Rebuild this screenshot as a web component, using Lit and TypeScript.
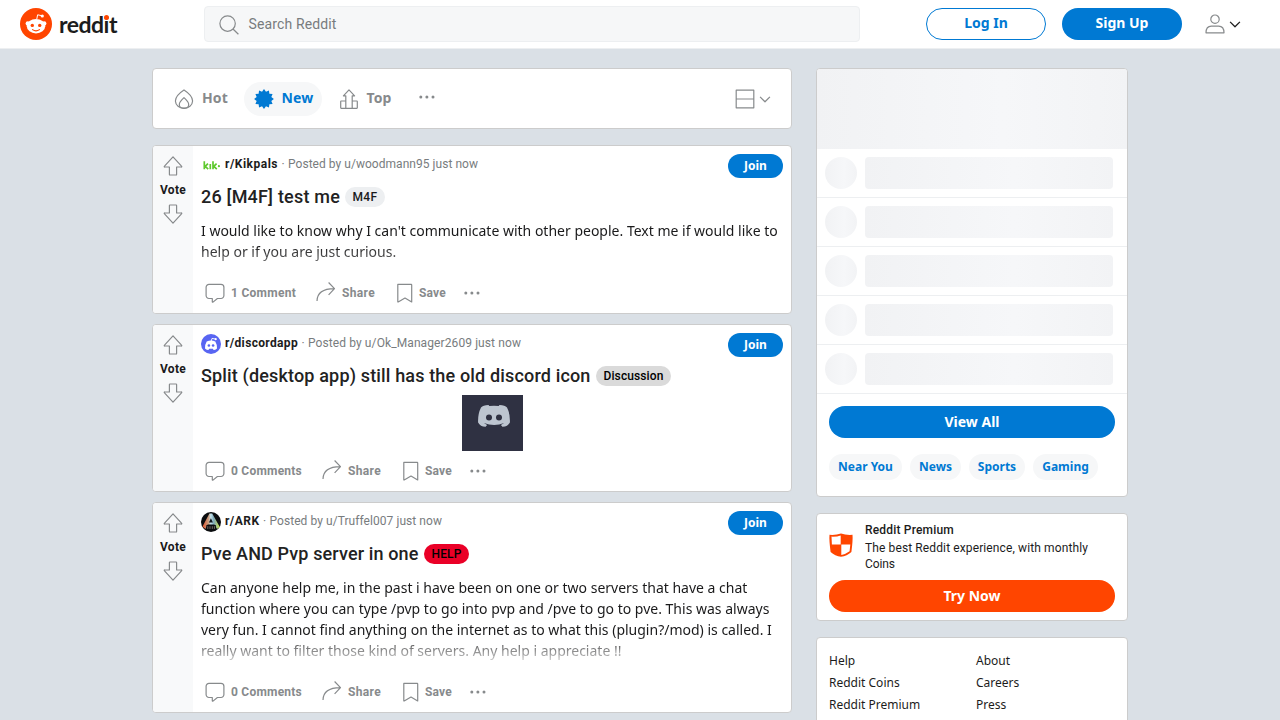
import { LitElement, html, css, svg, nothing } from "lit";
import { customElement, property } from "lit/decorators.js";
import { classMap } from "lit/directives/class-map.js";
import { styleMap } from "lit/directives/style-map.js";

const icon = (body: unknown, size = 20) =>
  html`<svg width=${size} height=${size} viewBox="0 0 20 20" fill="none" stroke="currentColor" stroke-width="1.2" stroke-linejoin="round">${body}</svg>`;

const icons = {
  up: svg`<path d="M10 .8 18.5 10.200a.4.4 0 0 1-.3.8H13.600v7.400a.6.6 0 0 1-.6.6H7a.6.6 0 0 1-.6-.6V11H1.800a.4.4 0 0 1-.3-.8Z"/>`,
  down: svg`<path d="M10 19.200 1.500 9.800a.4.4 0 0 1 .3-.8H6.400V1.600a.6.6 0 0 1 .6-.6h6a.6.6 0 0 1 .6.6V9h4.600a.4.4 0 0 1 .3.8Z"/>`,
  comment: svg`<path d="M7.7 19.2a.4.4 0 0 1-.4-.5v-3.2H4A2.9 2.9 0 0 1 1.1 12.6V4.3A2.9 2.9 0 0 1 4 1.4H16A2.9 2.9 0 0 1 18.9 4.3V12.6A2.9 2.9 0 0 1 16 15.5H12.4L8 19.1a.4.4 0 0 1-.3.1Z"/>`,
  share: svg`<path d="M1 18C1.200 10.300 6.500 5.800 18.200 5.700M12.600-.5 18.500 5.700l-5.900 6.200"/>`,
  save: svg`<path d="M2.8 1.4H16.2a.5.5 0 0 1 .5.5V19L10 15.1 3.2 19a.3.3 0 0 1-.4-.3Z"/>`,
  dots: svg`<g fill="currentColor" stroke="none"><circle cx="3.8" cy="10" r="1.5"/><circle cx="9.9" cy="10" r="1.5"/><circle cx="16" cy="10" r="1.5"/></g>`,
  chevron: svg`<path stroke-width="1.8" d="m3 7 7 7 7-7"/>`,
  hot: svg`<path d="M10 .9C12.8 2.7 18.6 7.1 18.6 12A8.2 7.6 0 0 1 10 19.3 8.2 7.6 0 0 1 1.4 12C1.4 7.1 7.2 2.7 10 .9Z"/><path d="M10 8.6c2.2 2 4.7 4.6 4.7 6.8 0 2.6-2.1 3.8-4.7 3.8s-4.7-1.2-4.7-3.8c0-2.2 2.5-4.8 4.7-6.8Z"/>`,
  top: svg`<path d="M2.2 12h4.6v7.3H2.2a.5.5 0 0 1-.5-.5V12.5a.5.5 0 0 1 .5-.5ZM13.2 12h4.6a.5.5 0 0 1 .5.5v6.3a.5.5 0 0 1-.5.5h-4.6ZM6.8 19.3V6.8H4.4L10 .9l5.6 5.9h-2.4v12.5Z"/>`,
  layout: svg`<path d="M1.2 1.2H18.8V18.8H1.2ZM1.2 10H18.8"/>`,
  user: svg`<circle cx="10" cy="5.2" r="4.2"/><path d="M1 18.8c0-4 2-6.7 5.4-6.7h7.2c3.4 0 5.4 2.7 5.4 6.7Z"/>`,
  search: svg`<circle cx="8.6" cy="8.6" r="7.7"/><path d="m14 14 5.4 5.3"/>`,
};

const burst = Array.from({ length: 24 }, (_, i) => {
  const r = i % 2 ? 7.6 : 9.9;
  const a = (i * Math.PI) / 12;
  return `${(10 + r * Math.sin(a)).toFixed(2)},${(10 - r * Math.cos(a)).toFixed(2)}`;
}).join(" ");

const mascot = html`<svg width="32" height="32" viewBox="0 0 32 32">
  <circle cx="16" cy="16" r="16" fill="#ff4500"/>
  <path d="m16.800 11 .8-4.200 4.700 1" fill="none" stroke="#fff" stroke-width="1"/>
  <circle cx="22.300" cy="8" r="1.600" fill="#fff"/>
  <circle cx="7.900" cy="15.600" r="2.300" fill="#fff"/><circle cx="24.100" cy="15.600" r="2.300" fill="#fff"/>
  <ellipse cx="16" cy="18.200" rx="9.200" ry="7.300" fill="#fff"/>
  <circle cx="12.300" cy="17.400" r="1.700" fill="#ff4500"/><circle cx="19.700" cy="17.400" r="1.700" fill="#ff4500"/>
  <path d="M12.500 21.600c2 1.400 5 1.400 7 0" fill="none" stroke="#ff4500" stroke-width="1.100" stroke-linecap="round"/>
</svg>`;

const avatars: Record<string, unknown> = {
  kik: html`<svg width="20" height="20" viewBox="0 0 20 20"><g stroke="#5fc92e" stroke-width="1.7" fill="none"><path d="M3.3 6.200v8M7 8.600 4.200 11.300 7.200 14.200M9.300 9v5.200M12 6.200v8M15.600 8.600 12.800 11.300 15.800 14.200"/></g><circle cx="17.900" cy="11.200" r="1.100" fill="#5fc92e"/></svg>`,
  discord: html`<svg width="20" height="20" viewBox="0 0 20 20"><circle cx="10" cy="10" r="10" fill="#5865f2"/><path d="M5.700 7.400q4.300-1.800 8.600 0 1.900 3 1.700 7-1.700 1.500-3.400 1.500l-.8-1.200H8.200l-.8 1.200q-1.700 0-3.400-1.500-.2-4 1.700-7Z" fill="#fff"/><path d="m10.200 7 .8-2.600 3.200.6" stroke="#fff" stroke-width=".9" fill="none"/><circle cx="14.700" cy="5.200" r="1.100" fill="#fff"/><circle cx="7.900" cy="11.500" r="1.300" fill="#5865f2"/><circle cx="12.100" cy="11.500" r="1.300" fill="#5865f2"/></svg>`,
  ark: html`<svg width="20" height="20" viewBox="0 0 20 20"><defs><linearGradient id="g"><stop stop-color="#e0532c"/><stop offset=".35" stop-color="#c9a184"/><stop offset=".48" stop-color="#c4e4ee"/><stop offset=".65" stop-color="#7fa9b8"/><stop offset="1" stop-color="#c8e04a"/></linearGradient></defs><circle cx="10" cy="10" r="10" fill="#0b0d0f"/><path d="M8.400 1.500h2.800L18.800 15l-2.800 2-2.600-4.500H6.600L4.400 17l-2.900-2.400Z" fill="url(#g)"/><path d="m9.900 6.200 2 4.400H7.900Z" fill="#101519"/><path d="M5.400 13h9.400v5.200H5.400Z" fill="#0b0d0f"/><path d="M6.800 14.200v2.700M9 14.200v2.700M11.300 14.200v2.700M13.400 14.200v2.700" stroke="#8a8279" stroke-width=".8"/></svg>`,
};

interface Post {
  avatar: string; sub: string; subW: number; by: string; byW: number;
  title: string; titleW: number;
  flair: string; flairW: number; flairBg: string; flairGap: number; flairInk: string;
  lines?: string[]; fade?: string; image?: boolean;
  comments: string; commentsW: number;
}

const posts: Post[] = [
  {
    avatar: "kik", sub: "r/Kikpals", subW: 53, by: "Posted by u/woodmann95 just now", byW: 190,
    title: "26 [M4F] test me", titleW: 139,
    flair: "M4F", flairW: 40, flairBg: "#edeff1", flairGap: 5, flairInk: "#1a1a1b",
    lines: ["I would like to know why I can't communicate with other people. Text me if would like to", "help or if you are just curious."],
    fade: "short", comments: "1 Comment", commentsW: 65,
  },
  {
    avatar: "discord", sub: "r/discordapp", subW: 73, by: "Posted by u/Ok_Manager2609 just now", byW: 213,
    title: "Split (desktop app) still has the old discord icon", titleW: 389.5,
    flair: "Discussion", flairW: 75, flairBg: "#dadada", flairGap: 5.5, flairInk: "#000",
    image: true, comments: "0 Comments", commentsW: 71,
  },
  {
    avatar: "ark", sub: "r/ARK", subW: 34.5, by: "Posted by u/Truffel007 just now", byW: 172.5,
    title: "Pve AND Pvp server in one", titleW: 217.5,
    flair: "HELP", flairW: 45, flairBg: "#ea0027", flairGap: 5.5, flairInk: "#000",
    lines: [
      "Can anyone help me, in the past i have been on one or two servers that have a chat",
      "function where you can type /pvp to go into pvp and /pve to go to pve. This was always",
      "very fun. I cannot find anything on the internet as to what this (plugin?/mod) is called. I",
      "really want to filter those kind of servers. Any help i appreciate !!",
    ],
    fade: "long", comments: "0 Comments", commentsW: 71,
  },
];

/** One line of text whose tracking is adjusted so that it fills the given width. */
@customElement("fit-text")
class FitText extends LitElement {
  @property() text = "";
  @property({ type: Number }) width = 0;

  static styles = css`
    :host { display: block; flex: none; white-space: nowrap; }
    .run { display: inline-block; }
  `;

  render() {
    return html`<span class="run">${this.text}</span>`;
  }

  updated() {
    this.style.width = `${this.width}px`;
    const run = this.renderRoot.querySelector<HTMLElement>(".run")!;
    run.style.letterSpacing = "0px";
    const natural = run.getBoundingClientRect().width;
    run.style.letterSpacing = `${(this.width - natural) / this.text.length}px`;
  }
}

const fit = (text: string, width: number, cls = "") =>
  html`<fit-text class=${cls} .text=${text} .width=${width}></fit-text>`;

const shared = css`
  * { box-sizing: border-box; }
  svg { display: block; flex: none; overflow: visible; }
  .pill {
    display: flex; align-items: center; justify-content: center; border-radius: 999px;
    font: 700 14px/18px "Noto Sans", sans-serif; color: #fff; background: #0079d3; height: 32px;
  }
  .card { background: #fff; border: 1px solid #ccc; border-radius: 4px; }
`;

@customElement("post-card")
class PostCard extends LitElement {
  @property({ attribute: false }) post!: Post;

  static styles = [shared, css`
    :host { display: block; }
    .card { display: flex; overflow: hidden; }
    .votes { width: 40px; flex: none; background: #f8f9fa; display: flex; flex-direction: column; align-items: center; padding-top: 9.5px; color: #878a8c; }
    .label { font: 700 12px/16px Roboto, sans-serif; color: #1a1a1b; margin: 6.5px 0 6px; }
    .main { flex: 1; min-width: 0; padding: 8px 8px 0; display: flex; flex-direction: column; }
    .head { display: flex; height: 24px; font: 12px/20px Roboto, sans-serif; color: #787c7e; }
    .avatar { margin: 1px 4px 0 0; }
    .sub { font-weight: 700; color: #1c1c1c; }
    .sep { width: 10px; text-align: center; }
    .join { margin-left: auto; width: 55px; height: 24px; font-size: 12px; line-height: 16px; }
    .titlerow { display: flex; height: 22px; margin-top: 8px; align-items: center; font: 500 18px/22px Roboto, sans-serif; color: #222; }
    .flair { display: flex; align-items: center; justify-content: center; height: 20px; border-radius: 20px; font: 500 12px/16px Roboto, sans-serif; }
    .body { margin-top: 12px; height: 53px; font: 14px/21px "Noto Sans", sans-serif; color: #1a1a1b; white-space: nowrap; }
    .short { -webkit-mask-image: linear-gradient(180deg, #000 50%, transparent 130%); }
    .body.long { height: 95px; -webkit-mask-image: linear-gradient(180deg, #000 60%, transparent 96%); }
    .media { margin-top: 8px; height: 56px; display: flex; justify-content: center; }
    .actions { display: flex; height: 40px; align-items: center; padding-left: 4px; font: 700 12px/16px Roboto, sans-serif; color: #878a8c; }
    .action { display: flex; align-items: center; gap: 6px; margin-right: 20px; }
    .action.keep { gap: 4px; margin-right: 16px; }
  `];

  render() {
    const p = this.post;
    return html`<article class="card">
      <div class="votes">${icon(icons.up)}<span class="label">${fit("Vote", 26)}</span>${icon(icons.down)}</div>
      <div class="main">
        <div class="head">
          <span class="avatar">${avatars[p.avatar]}</span>
          ${fit(p.sub, p.subW, "sub")}<span class="sep">·</span>${fit(p.by, p.byW)}
          <span class="pill join">Join</span>
        </div>
        <div class="titlerow">${fit(p.title, p.titleW)}
          <span class="flair" style=${styleMap({ width: `${p.flairW}px`, background: p.flairBg, marginLeft: `${p.flairGap}px`, color: p.flairInk })}>${fit(p.flair, p.flairW - 15)}</span>
        </div>
        ${p.lines ? html`<div class=${classMap({ body: true, [p.fade!]: true })}>${p.lines.map((l) => html`<div>${l}</div>`)}</div>` : nothing}
        ${p.image ? html`<div class="media"><svg width="61" height="56" viewBox="0 0 61 56">
            <path d="M0 0h61v56H0Z" fill="#2f3142"/>
            <path d="M26.500 10q-5.500.4-7.500 2.400-3.300 6.500-2.900 15.200 2.300 4.300 7.500 4.200l1.500-1.900-3.200-1.800q10.400 4 20.200 0l-3.200 1.800 1.500 1.900q5.200.1 7.500-4.200.4-8.700-2.900-15.200-2-2-7.500-2.400l-.8 1q-4.700-.6-9.400 0Z" fill="#bdc5d0"/>
            <circle cx="27" cy="22.600" r="3" fill="#2f3142"/><circle cx="37" cy="22.600" r="3" fill="#2f3142"/>
          </svg></div>` : nothing}
        <div class="actions">
          <span class="action">${icon(icons.comment)}${fit(p.comments, p.commentsW)}</span>
          <span class="action">${icon(icons.share)}${fit("Share", 33)}</span>
          <span class="action keep">${icon(icons.save)}${fit("Save", 27)}</span>
          ${icon(icons.dots)}
        </div>
      </div>
    </article>`;
  }
}

@customElement("app-root")
class AppRoot extends LitElement {
  static styles = [shared, css`
    :host { display: block; height: 720px; overflow: hidden; background: #dae0e6; font-family: "Noto Sans", sans-serif; color: #1c1c1c; }
    .top { height: 49px; background: #fff; border-bottom: 1px solid #edeff1; display: flex; align-items: center; padding: 0 20px; }
    .brand { display: flex; align-items: center; width: 184px; gap: 7px; }
    .word { position: relative; font: 700 23px/32px Lato, sans-serif; color: #1c1c1c; }
    .dot { position: absolute; left: 45px; top: 7px; width: 5px; height: 5px; border-radius: 50%; background: #ff4500; }
    .search { width: 656px; height: 36px; background: #f6f7f8; border: 1px solid #edeff1; border-radius: 4px; display: flex; align-items: center; padding-left: 14px; gap: 9.500px; font: 14px/18px Roboto, sans-serif; color: #787c7e; }
    .search svg { color: #878a8c; transform: translateY(1px); }
    .auth { width: 120px; padding-bottom: 2px; }
    .login { margin: 0 16px 0 66px; background: #fff; color: #0079d3; border: 1px solid #0079d3; }
    .account { display: flex; align-items: center; gap: 3px; margin-left: 23px; color: #878a8c; }
    .dark { color: #1c1c1c; }
    .page { display: grid; grid-template-columns: 640px 312px; column-gap: 24px; justify-content: center; padding-top: 19px; align-items: start; }
    .feed { display: flex; flex-direction: column; gap: 10px; }
    .sort { height: 61px; margin-bottom: 6px; display: flex; align-items: center; padding: 0 19px 0 12px; color: #878a8c; font: 700 14px/18px "Noto Sans", sans-serif; }
    .tab { display: flex; align-items: center; height: 34px; gap: 8px; padding: 0 8px 2px 9px; border-radius: 20px; margin-right: 8px; }
    .tab svg { transform: translateY(1px); }
    .tab.more { padding-bottom: 5px; }
    .tab.active { background: #f6f7f8; color: #0079d3; padding-left: 9.500px; }
    .view { margin-left: auto; display: flex; align-items: center; gap: 3px; }
    .side { display: flex; flex-direction: column; gap: 16px; }
    .communities { overflow: hidden; }
    .banner, .bar, .disc { background: linear-gradient(91deg, #f1f2f4, #f6f7f9 60%, #f2f3f5); }
    .banner { height: 80px; }
    .row { display: flex; gap: 8px; padding: 8px; height: 49px; border-bottom: 1px solid #edeff1; }
    .disc { width: 32px; height: 32px; border-radius: 50%; }
    .bar { width: 248px; height: 32px; border-radius: 4px; }
    .all { margin: 12px 12px 16px; }
    .chips { display: flex; gap: 8px; padding: 0 12px 16px; }
    .chip { height: 26px; border-radius: 20px; background: #f6f7f8; color: #0079d3; font: 700 12px/26px "Noto Sans", sans-serif; text-align: center; }
    .premium { padding: 7px 12px 8px; height: 108px; display: flex; flex-direction: column; }
    .pitch { display: flex; gap: 12px; align-items: center; height: 51px; margin-bottom: 8px; font: 12px/16px Roboto, sans-serif; color: #1c1c1c; }
    .pitch svg { margin-bottom: 4px; }
    .strong { font-weight: 500; line-height: 16px; padding-bottom: 2px; }
    .try { background: #ff4500; flex: none; }
    .links { display: grid; grid-template-columns: 147px 1fr; padding: 12px; height: 140px; align-content: start; font: 12px/22px "Noto Sans", sans-serif; }
  `];

  render() {
    return html`
      <header class="top">
        <div class="brand">${mascot}<div class="word">${fit("reddit", 58)}<i class="dot"></i></div></div>
        <div class="search">${icon(icons.search)}${fit("Search Reddit", 88)}</div>
        <span class="pill auth login">Log In</span><span class="pill auth">Sign Up</span>
        <div class="account">${icon(icons.user)}<span class="dark">${icon(icons.chevron, 14)}</span></div>
      </header>
      <main class="page">
        <section class="feed">
          <nav class="card sort">
            <span class="tab">${icon(icons.hot)}${fit("Hot", 26)}</span>
            <span class="tab active"><svg width="20" height="20" viewBox="0 0 20 20" fill="currentColor"><polygon points=${burst}/></svg>${fit("New", 32)}</span>
            <span class="tab">${icon(icons.top)}${fit("Top", 25)}</span>
            <span class="tab more">${icon(icons.dots)}</span>
            <span class="view">${icon(icons.layout)}${icon(icons.chevron, 14)}</span>
          </nav>
          ${posts.map((p) => html`<post-card .post=${p}></post-card>`)}
        </section>
        <aside class="side">
          <div class="card communities">
            <div class="banner"></div>
            ${[0, 1, 2, 3, 4].map(() => html`<div class="row"><div class="disc"></div><div class="bar"></div></div>`)}
            <div class="pill all">View All</div>
            <div class="chips">
              ${([["Near You", 73], ["News", 51], ["Sports", 56], ["Gaming", 65]] as const).map(([t, w]) => html`<span class="chip" style=${styleMap({ width: `${w}px` })}>${t}</span>`)}
            </div>
          </div>
          <div class="card premium">
            <div class="pitch">
              <svg width="24" height="24" viewBox="0 0 24 24"><path d="M.5 1.800Q7 2.300 12 .5Q17 2.300 23.500 1.800Q24 7 22.400 19Q18 23 12 23.800Q6 23 1.600 19Q0 7 .5 1.800Z" fill="#ff4500"/><path d="M2.500 3.600Q8 3.800 11.700 2.400V11.500H2.900ZM12.300 11.500H21.300L20.600 18.200Q16.500 21.200 12.300 22Z" fill="#fff"/></svg>
              <div>${fit("Reddit Premium", 89, "strong")}${fit("The best Reddit experience, with monthly", 223)}${fit("Coins", 30)}</div>
            </div>
            <div class="pill try">Try Now</div>
          </div>
          <div class="card links">
            ${["Help", "About", "Reddit Coins", "Careers", "Reddit Premium", "Press"].map((t) => html`<span>${t}</span>`)}
          </div>
        </aside>
      </main>`;
  }
}
